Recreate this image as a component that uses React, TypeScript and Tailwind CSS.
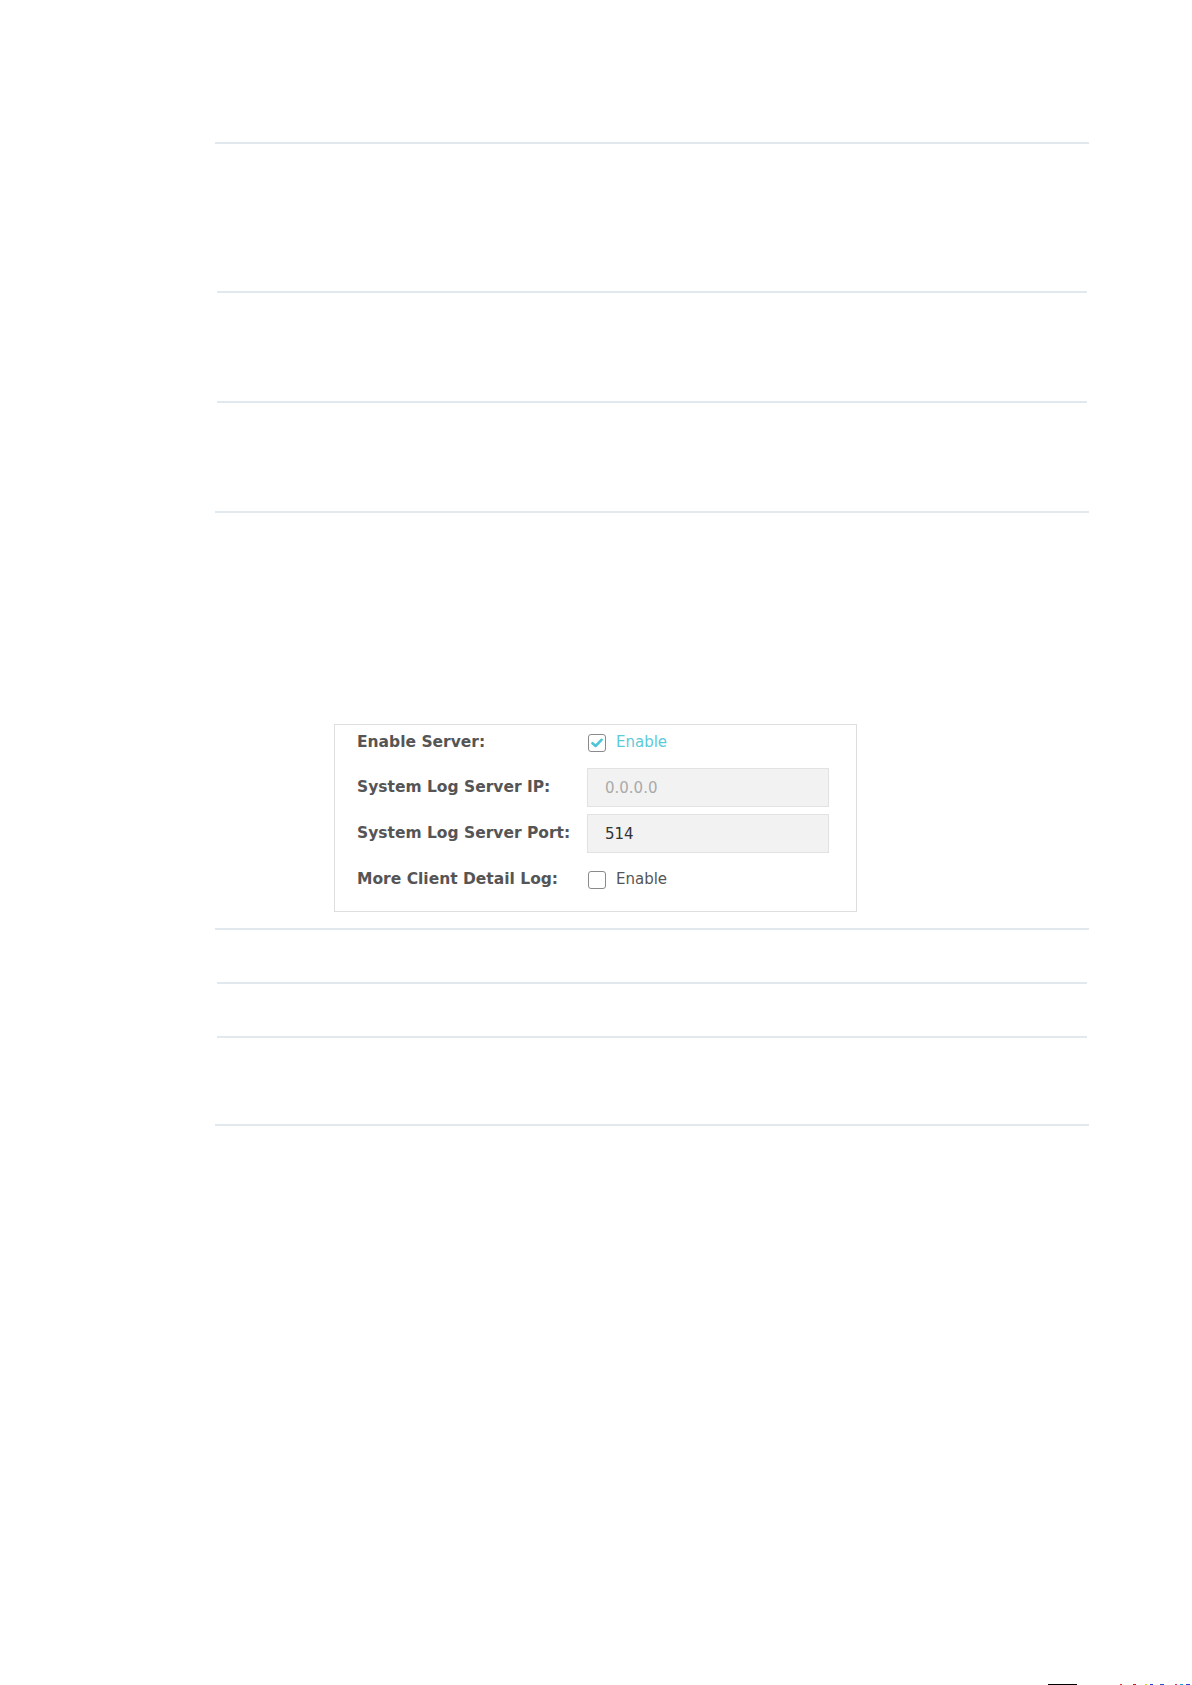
import React, { useState } from "react";

const labelCls =
  "w-[230px] shrink-0 text-[15.5px] font-bold text-[#555555] leading-none";

const Checkbox = ({ checked, onClick }: { checked: boolean; onClick: () => void }) => (
  <button
    type="button"
    onClick={onClick}
    className="w-[18px] h-[18px] shrink-0 rounded-[3px] border-[1.5px] border-[#8a8a8a] bg-white flex items-center justify-center p-0"
  >
    {checked && (
      <svg width="12" height="10" viewBox="0 0 12 10">
        <path
          d="M1.5 5.2 L4.6 8 L10.5 1.8"
          fill="none"
          stroke="#4fc6d6"
          strokeWidth="2.6"
          strokeLinecap="round"
          strokeLinejoin="round"
        />
      </svg>
    )}
  </button>
);

const Rule = ({ className }: { className: string }) => (
  <div className={`h-[2px] bg-[#e2e9ee] ${className}`} />
);

const App = () => {
  const [enabled, setEnabled] = useState(true);
  const [detail, setDetail] = useState(false);
  const [port, setPort] = useState("514");

  return (
    <div
      className="relative w-[1192px] h-[1685px] bg-white overflow-hidden pt-[142px]"
      style={{ fontFamily: '"DejaVu Sans", Verdana, sans-serif' }}
    >
      <Rule className="ml-[215px] w-[874px]" />
      <Rule className="ml-[217px] w-[870px] mt-[147px]" />
      <Rule className="ml-[217px] w-[870px] mt-[108px]" />
      <Rule className="ml-[215px] w-[874px] mt-[108px]" />

      {/* syslog server settings */}
      <div className="ml-[334px] mt-[211px] w-[523px] h-[188px] border border-[#dedede] pl-[22px]">
        <div className="flex items-center h-[34px] pt-[1px]">
          <span className={labelCls}>Enable Server:</span>
          <div className="flex items-center ml-[1px]">
            <Checkbox checked={enabled} onClick={() => setEnabled(!enabled)} />
            <span className="ml-[10px] text-[15px] text-[#5ccad8] leading-none">Enable</span>
          </div>
        </div>
        <div className="flex items-center h-[39px] mt-[9px]">
          <span className={labelCls}>System Log Server IP:</span>
          <input
            disabled
            value="0.0.0.0"
            readOnly
            className="w-[242px] h-[39px] bg-[#f2f2f2] border border-[#e2e2e2] pl-[17px] text-[15px] text-[#aaaaaa] outline-none"
          />
        </div>
        <div className="flex items-center h-[39px] mt-[7px]">
          <span className={labelCls}>System Log Server Port:</span>
          <input
            value={port}
            onChange={(e) => setPort(e.target.value)}
            className="w-[242px] h-[39px] bg-[#f2f2f2] border border-[#e2e2e2] pl-[17px] text-[15px] text-[#333333] outline-none"
          />
        </div>
        <div className="flex items-center h-[39px] mt-[7px]">
          <span className={labelCls}>More Client Detail Log:</span>
          <div className="flex items-center ml-[1px]">
            <Checkbox checked={detail} onClick={() => setDetail(!detail)} />
            <span className="ml-[10px] text-[15px] text-[#555555] leading-none">Enable</span>
          </div>
        </div>
      </div>

      <Rule className="ml-[215px] w-[874px] mt-[16px]" />
      <Rule className="ml-[217px] w-[870px] mt-[52px]" />
      <Rule className="ml-[217px] w-[870px] mt-[52px]" />
      <Rule className="ml-[215px] w-[874px] mt-[86px]" />

      {/* cut-off edge of the next page */}
      <div className="absolute left-[1048px] bottom-0 w-[29px] h-[1px] bg-black" />
      <div className="absolute left-[1120px] bottom-0 flex gap-[3px] h-[1px]">
        <span className="w-[2px] bg-[#e03030]" />
        <span className="w-[3px] ml-[8px] bg-[#c02020]" />
        <span className="w-[2px] ml-[6px] bg-[#e0d020]" />
        <span className="w-[3px] bg-[#2040e0]" />
        <span className="w-[4px] ml-[4px] bg-[#3050c0]" />
        <span className="w-[2px] ml-[8px] bg-[#e03060]" />
        <span className="w-[3px] bg-[#20a0e0]" />
        <span className="w-[4px] bg-[#3040d0]" />
        <span className="w-[3px] bg-[#d0c020]" />
        <span className="w-[2px] bg-[#c03030]" />
      </div>
    </div>
  );
};

export default App;
